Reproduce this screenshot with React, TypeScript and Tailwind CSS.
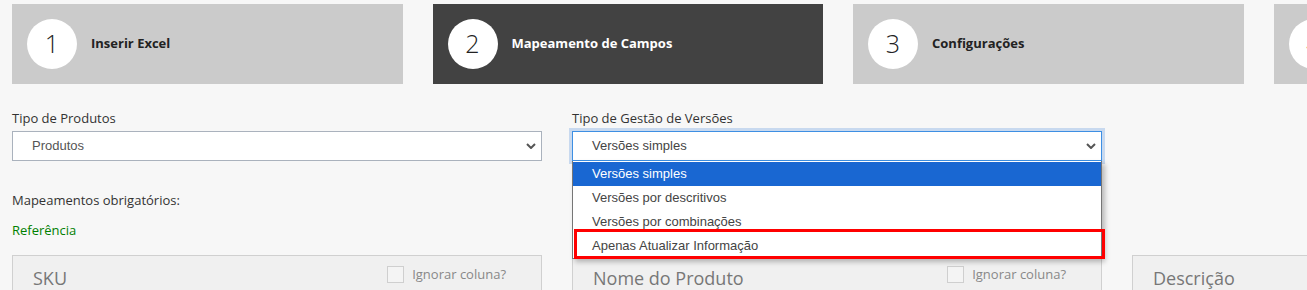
import React from "react";

function Chevron() {
  return (
    <svg width="10" height="6" viewBox="0 0 10 6" className="shrink-0">
      <path d="M1 1l4 4 4-4" fill="none" stroke="#555" strokeWidth="2" />
    </svg>
  );
}

function Card({ title }: { title: string }) {
  return (
    <div className="flex h-[60px] w-[530px] shrink-0 items-start justify-between border border-[#d0d0d0] bg-[#f0f0f0] pl-[20px] pr-[35px] pt-[10px]">
      <span className="text-[18px] leading-[24px] text-[#777]">{title}</span>
      <div className="flex items-center gap-[8px]">
        <span className="block h-[17px] w-[17px] border border-[#cfcfcf] bg-[#f4f4f4]" />
        <span className="text-[13px] leading-[17px] text-[#888]">Ignorar coluna?</span>
      </div>
    </div>
  );
}

export default function App() {
  const steps = [
    { n: "1", label: "Inserir Excel", active: false },
    { n: "2", label: "Mapeamento de Campos", active: true },
    { n: "3", label: "Configurações", active: false },
    { n: "4", label: "Validação", active: false },
  ];
  const options = [
    "Versões simples",
    "Versões por descritivos",
    "Versões por combinações",
    "Apenas Atualizar Informação",
  ];
  return (
    <div className="h-[290px] w-[1307px] overflow-hidden bg-[#f7f7f7] font-['Open_Sans',sans-serif] text-[#333]">
      <div className="flex gap-[30px] pl-[12px] pt-[4px]">
        {steps.map((s) => (
          <div
            key={s.n}
            className={`flex h-[80px] w-[390.5px] shrink-0 items-center pl-[15px] ${
              s.active ? "bg-[#424242]" : "bg-[#cbcbcb]"
            }`}
          >
            <div className="flex h-[50px] w-[50px] shrink-0 items-center justify-center rounded-full bg-white text-[25px] font-light text-[#222]">
              {s.n}
            </div>
            <span
              className={`ml-[14px] whitespace-nowrap text-[13px] font-bold ${
                s.active ? "text-white" : "text-[#222]"
              }`}
            >
              {s.label}
            </span>
          </div>
        ))}
      </div>

      <div className="flex gap-[30px] px-[12px] pt-[25px]">
        <div className="w-[530px] shrink-0">
          <div className="text-[13px] leading-[18px]">Tipo de Produtos</div>
          <div className="mt-[4px] flex h-[30px] items-center justify-between border border-[#aab2bd] bg-white pl-[19px] pr-[5px] font-['Liberation_Sans',Arial,sans-serif] text-[13px] text-[#555]">
            <span>Produtos</span>
            <Chevron />
          </div>
        </div>
        <div className="relative z-10 w-[530px] shrink-0">
          <div className="text-[13px] leading-[18px]">Tipo de Gestão de Versões</div>
          <div className="mt-[4px] flex h-[30px] items-center justify-between border border-[#3d8fe3] bg-white pl-[19px] pr-[5px] font-['Liberation_Sans',Arial,sans-serif] text-[13px] text-[#444] shadow-[0_0_0_3px_#c8d9ef]">
            <span>Versões simples</span>
            <Chevron />
          </div>
          <div className="absolute left-0 right-0 top-full border border-t-0 border-[#767676] bg-white pt-[1px] font-['Liberation_Sans',Arial,sans-serif] text-[13px] shadow-[3px_3px_5px_rgba(0,0,0,0.25)]">
            {options.map((o, i) => (
              <div
                key={o}
                className={`flex h-[24px] items-center pl-[19px] ${
                  i === 0 ? "bg-[#1967d2] text-white" : "text-[#444]"
                }`}
              >
                {o}
              </div>
            ))}
            <div className="absolute left-[1px] right-[-4px] top-[68px] h-[30px] border-[3px] border-[#ff0000]" />
          </div>
        </div>
      </div>

      <div className="px-[12px] pt-[30px]">
        <div className="text-[13px] leading-[18px]">Mapeamentos obrigatórios:</div>
        <div className="mt-[12px] text-[13px] leading-[18px] text-[#008000]">Referência</div>
      </div>

      <div className="mt-[16px] flex gap-[30px] px-[12px]">
        <Card title="SKU" />
        <Card title="Nome do Produto" />
        <div className="flex h-[60px] w-[530px] shrink-0 items-start border border-[#d0d0d0] bg-[#f0f0f0] pl-[20px] pt-[10px]">
          <span className="text-[18px] leading-[24px] text-[#777]">Descrição</span>
        </div>
      </div>
    </div>
  );
}
